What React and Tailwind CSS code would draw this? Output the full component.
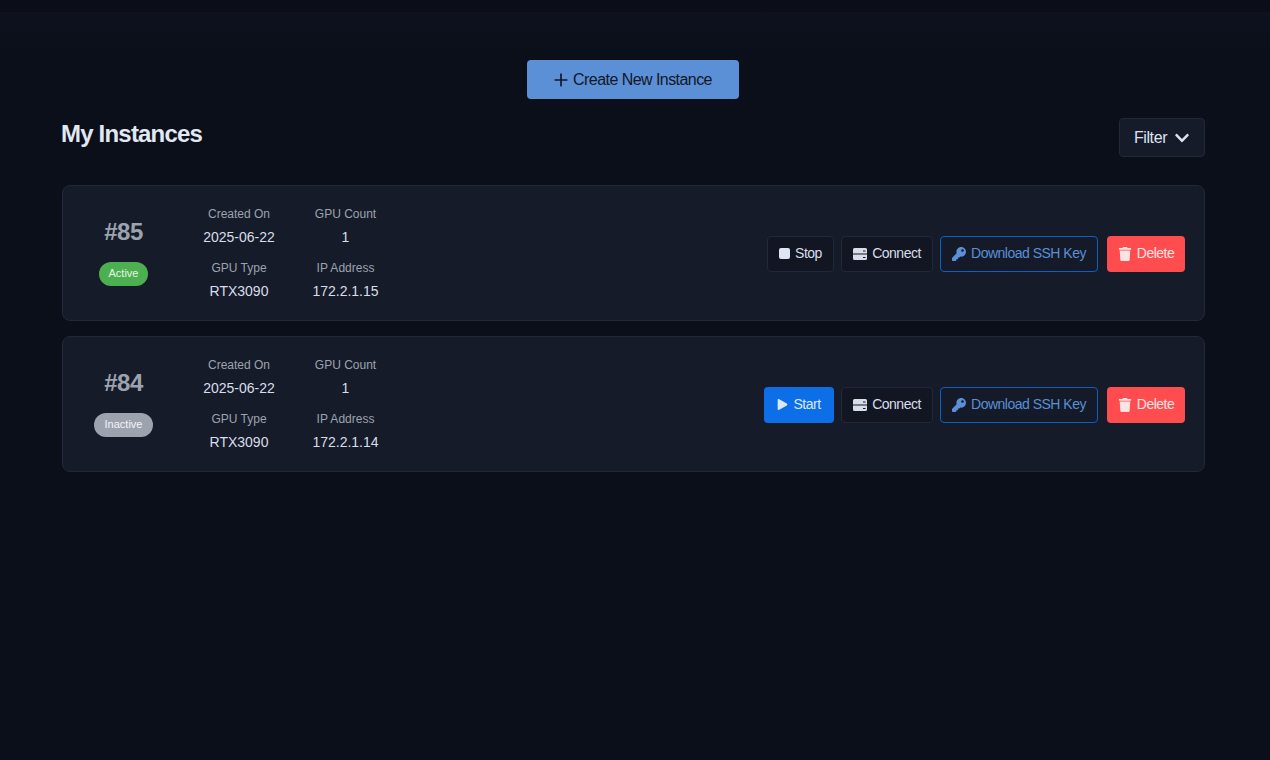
import { FaPlay, FaKey, FaTrash, FaChevronDown } from "react-icons/fa";
import { Plus } from "lucide-react";

const instances = [
    { id: 85, active: true, created: "2025-06-22", count: 1, type: "RTX3090", ip: "172.2.1.15" },
    { id: 84, active: false, created: "2025-06-22", count: 1, type: "RTX3090", ip: "172.2.1.14" },
];

function ServerIcon() {
    return (
        <svg viewBox="0 0 14 12" className="h-[12px] w-[14px]">
            <path d="M1.5 0h11A1.5 1.5 0 0 1 14 1.5v4H0v-4A1.5 1.5 0 0 1 1.5 0z" fill="currentColor" />
            <path d="M0 6.5h14v4a1.5 1.5 0 0 1-1.5 1.5h-11A1.5 1.5 0 0 1 0 10.500z" fill="currentColor" />
            <rect x="10" y="9" width="2.500" height="1" fill="#111622" />
            <rect x="10" y="2.500" width="2.500" height="1" fill="#111622" />
        </svg>
    );
}

function Field({ label, value }) {
    return (
        <div className="flex flex-col items-center">
            <span className="text-[12px] leading-[18px] text-[#9ca3af]">{label}</span>
            <span className="mt-[4px] text-[14px] leading-[21px] font-medium text-[#d8dee9]">{value}</span>
        </div>
    );
}

function InstanceCard({ instance }) {
    return (
        <div className="flex h-[136px] items-center justify-between rounded-lg border border-[#222838] bg-[#161b29] pr-[19px]">
            <div className="flex items-center">
                <div className="mb-[2px] flex w-[121px] flex-col items-center">
                    <span className="text-[24px] leading-[25px] font-bold tracking-[-0.5px] text-[#9ca3af]">#{instance.id}</span>
                    <span
                        className={
                            instance.active
                                ? "mt-[18px] flex h-[24px] w-[49px] items-center justify-center rounded-full bg-[#4caf50] text-[11px] font-medium text-[#e8f5e9]"
                                : "mt-[18px] flex h-[24px] w-[59px] items-center justify-center rounded-full bg-[#9ca3af] text-[11px] font-medium text-[#f3f4f6]"
                        }
                    >
                        {instance.active ? "Active" : "Inactive"}
                    </span>
                </div>
                <div className="grid grid-cols-[106px_107px] gap-y-[11px] pl-[2px]">
                    <Field label="Created On" value={instance.created} />
                    <Field label="GPU Count" value={instance.count} />
                    <Field label="GPU Type" value={instance.type} />
                    <Field label="IP Address" value={instance.ip} />
                </div>
            </div>
            <div className="mt-[1px] flex items-center gap-[7px] text-[14px] tracking-[-0.5px]">
                {instance.active ? (
                    <button className="flex h-[36px] w-[67px] items-center justify-center gap-[5px] rounded border border-[#222838] bg-[#111622] text-[#d8dee9]">
                        <span className="size-[11px] rounded-[2px] bg-[#dfe5f2]" />
                        Stop
                    </button>
                ) : (
                    <button className="flex h-[36px] w-[70px] items-center justify-center gap-[5px] rounded bg-[#0d6fe8] text-[#dbe7f8]">
                        <FaPlay className="size-[11px]" />
                        Start
                    </button>
                )}
                <button className="flex h-[36px] w-[92px] items-center justify-center gap-[5px] rounded border border-[#222838] bg-[#111622] text-[#d8dee9]">
                    <ServerIcon />
                    Connect
                </button>
                <button className="flex h-[36px] w-[158px] items-center justify-center gap-[5px] rounded border border-[#0d5fc4] bg-[#141a28] text-[#5b8fd6]">
                    <FaKey className="size-[14px]" />
                    Download SSH Key
                </button>
                <button className="ml-[2px] flex h-[36px] w-[78px] items-center justify-center gap-[5px] rounded bg-[#ff4d4f] text-[#fde4e4]">
                    <FaTrash className="size-[14px]" />
                    Delete
                </button>
            </div>
        </div>
    );
}

export default function App() {
    return (
        <div className="min-h-[760px] bg-[#0b0f1a] font-['Liberation_Sans',Arial,sans-serif]">
            <div className="h-[12px] bg-[#0b0e19]" />
            <div className="bg-[linear-gradient(#0e121e,#0b0f1a_40px)] pl-[62px]">
                <div className="w-[1143px] pt-[48px]">
                    <div className="flex justify-center pr-[1px]">
                        <button className="flex h-[39px] w-[212px] items-center justify-center gap-[2px] rounded bg-[#5b8fd6] pr-[3px] text-[16px] tracking-[-0.55px] text-[#111827]">
                            <Plus className="size-[20px]" />
                            Create New Instance
                        </button>
                    </div>
                    <div className="mt-[19px] flex items-start justify-between">
                        <h2 className="mt-[1px] -ml-[1px] text-[24px] leading-[29px] font-bold tracking-[-0.8px] text-[#e2e8f2]">My Instances</h2>
                        <button className="flex h-[39px] w-[86px] items-center justify-center gap-[7px] rounded border border-[#222838] bg-[#161b29] text-[16px] tracking-[-0.4px] text-[#dde3ee]">
                            Filter
                            <FaChevronDown className="size-[16px]" />
                        </button>
                    </div>
                    <div className="mt-[28px] flex flex-col gap-[15px]">
                        {instances.map((instance) => (
                            <InstanceCard key={instance.id} instance={instance} />
                        ))}
                    </div>
                </div>
            </div>
        </div>
    );
}
